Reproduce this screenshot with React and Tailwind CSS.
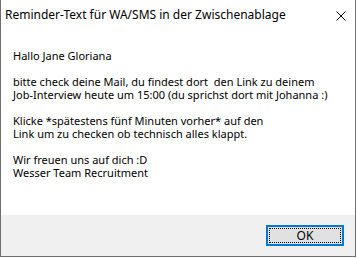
export default function App() {
    const lines = [
        "Hallo Jane Gloriana",
        "",
        "bitte check deine Mail, du findest dort  den Link zu deinem",
        "Job-Interview heute um 15:00 (du sprichst dort mit Johanna :)",
        "",
        "Klicke *spätestens fünf Minuten vorher* auf den",
        "Link um zu checken ob technisch alles klappt.",
        "",
        "Wir freuen uns auf dich :D",
        "Wesser Team Recruitment",
    ];

    return (
        <div className="h-[258px] w-[358px] bg-white font-['Noto_Sans',sans-serif] text-black">
            <div className="flex h-[257px] w-[356px] flex-col border-x border-b border-[#6e6e6e]">
                {/* title bar */}
                <div className="flex h-[30px] items-center justify-between pl-[4px] pr-[9px]">
                    <span className="text-[12px] leading-none">Reminder-Text für WA/SMS in der Zwischenablage</span>
                    <svg width="10" height="10" viewBox="0 0 10 10" className="mt-[1px]">
                        <path d="M0.5 0.5 L9.5 9.5 M9.5 0.5 L0.5 9.5" stroke="#000" strokeWidth="1" />
                    </svg>
                </div>

                {/* message */}
                <div className="flex-1 bg-white pl-[12px] pt-[19px]">
                    {lines.map((line, i) => (
                        <div key={i} className="h-[13px] whitespace-pre text-[11px] leading-[13px]">
                            {line}
                        </div>
                    ))}
                </div>

                {/* footer */}
                <div className="flex h-[41px] justify-end bg-[#f0f0f0] pr-[11px] pt-[10px]">
                    <button className="h-[21px] w-[78px] border-2 border-[#0078d7] bg-[#e1e1e1] p-[1px]">
                        <div className="flex h-full w-full items-center justify-center border border-dotted border-black text-[12px] leading-none">
                            OK
                        </div>
                    </button>
                </div>
            </div>
        </div>
    );
}
